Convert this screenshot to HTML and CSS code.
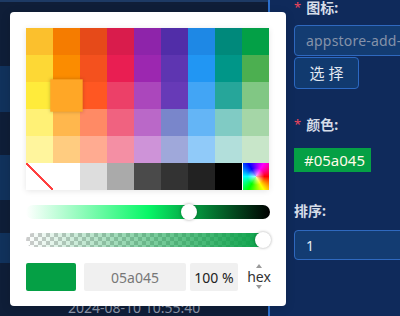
FILE: index.html
```html
<!DOCTYPE html>
<html lang="zh">
<head>
<meta charset="utf-8">
<link rel="stylesheet" href="styles.css">
</head>
<body>
<div class="page">
  <div class="list">
    <div class="row stripe"></div>
    <div class="row dark r1"></div>
    <div class="row light r2"></div>
    <div class="row dark r3"></div>
    <div class="row light r4"></div>
    <div class="row dark r5"></div>
    <div class="row light r6"></div>
    <div class="row dark r7"><span class="date">2024-08-10 10:55:40</span></div>
  </div>

  <aside class="form">
    <div class="label"><span class="req">*</span>图标:</div>
    <div class="input icon-input"><span class="placeholder">appstore-add-o</span></div>
    <button class="btn">选 择</button>

    <div class="label l2"><span class="req">*</span>颜色:</div>
    <div class="tag">#05a045</div>

    <div class="label l3">排序:</div>
    <div class="input sort-input"><span class="value">1</span></div>
  </aside>

  <div class="picker">
    <div class="palette">
      <span class="cell" style="background:#fbc02d"></span>
      <span class="cell" style="background:#f57c00"></span>
      <span class="cell" style="background:#e64a19"></span>
      <span class="cell" style="background:#d91c4c"></span>
      <span class="cell" style="background:#8e24aa"></span>
      <span class="cell" style="background:#512da8"></span>
      <span class="cell" style="background:#1e88e5"></span>
      <span class="cell" style="background:#00897b"></span>
      <span class="cell" style="background:#03a046"></span>

      <span class="cell" style="background:#fdd835"></span>
      <span class="cell" style="background:#fb8c00"></span>
      <span class="cell" style="background:#f4511e"></span>
      <span class="cell" style="background:#e91e52"></span>
      <span class="cell" style="background:#9c27b0"></span>
      <span class="cell" style="background:#5e35b1"></span>
      <span class="cell" style="background:#2196f3"></span>
      <span class="cell" style="background:#009688"></span>
      <span class="cell" style="background:#4caf50"></span>

      <span class="cell" style="background:#ffeb3b"></span>
      <span class="cell selected" style="background:#ffa726"></span>
      <span class="cell" style="background:#ff5722"></span>
      <span class="cell" style="background:#ec4068"></span>
      <span class="cell" style="background:#ab47bc"></span>
      <span class="cell" style="background:#673ab7"></span>
      <span class="cell" style="background:#42a5f5"></span>
      <span class="cell" style="background:#26a69a"></span>
      <span class="cell" style="background:#81c784"></span>

      <span class="cell" style="background:#fff176"></span>
      <span class="cell" style="background:#ffb74d"></span>
      <span class="cell" style="background:#ff8a65"></span>
      <span class="cell" style="background:#f06280"></span>
      <span class="cell" style="background:#ba68c8"></span>
      <span class="cell" style="background:#7986cb"></span>
      <span class="cell" style="background:#64b5f6"></span>
      <span class="cell" style="background:#80cbc4"></span>
      <span class="cell" style="background:#a5d6a7"></span>

      <span class="cell" style="background:#fff59d"></span>
      <span class="cell" style="background:#ffcc80"></span>
      <span class="cell" style="background:#ffab91"></span>
      <span class="cell" style="background:#f48fa4"></span>
      <span class="cell" style="background:#ce93d8"></span>
      <span class="cell" style="background:#9fa8da"></span>
      <span class="cell" style="background:#90caf9"></span>
      <span class="cell" style="background:#b2dfdb"></span>
      <span class="cell" style="background:#c8e6c9"></span>

      <span class="cell none"></span>
      <span class="cell" style="background:#ffffff"></span>
      <span class="cell" style="background:#dddddd"></span>
      <span class="cell" style="background:#aaaaaa"></span>
      <span class="cell" style="background:#4a4a4a"></span>
      <span class="cell" style="background:#333333"></span>
      <span class="cell" style="background:#222222"></span>
      <span class="cell" style="background:#000000"></span>
      <span class="cell rainbow"></span>
    </div>

    <div class="slider lightness"><span class="thumb" style="left:67%"></span></div>
    <div class="slider alpha"><span class="bar"></span><span class="thumb end"></span></div>

    <div class="inputs">
      <span class="swatch"></span>
      <span class="field hex">05a045</span>
      <span class="field pct">100 %</span>
      <span class="mode">
        <span class="tri up"></span>
        <span class="mode-text">hex</span>
        <span class="tri down"></span>
      </span>
    </div>
  </div>
</div>
</body>
</html>
```

FILE: styles.css
```css
* { box-sizing: border-box; }
html, body { margin: 0; padding: 0; }
body {
  width: 400px;
  height: 316px;
  overflow: hidden;
  font-family: "Noto Sans", "Noto Sans CJK SC", sans-serif;
  background: #0f1e38;
}
.page {
  position: relative;
  display: flex;
  width: 400px;
  height: 316px;
}

/* left list background */
.list {
  width: 268px;
  flex: none;
  display: flex;
  flex-direction: column;
}
.row { flex: none; }
.stripe { height: 2px; background: #1d3a64; }
.dark { background: #0f1e38; }
.light { background: #11325c; }
.r1 { height: 64px; }
.r2 { height: 46px; }
.r3 { height: 43px; }
.r4 { height: 45px; }
.r5 { height: 33px; }
.r6 { height: 30px; }
.r7 { flex: 1; padding: 35px 0 0 68px; }
.date {
  display: block;
  font-size: 14px;
  line-height: 20px;
  color: #8e97aa;
  white-space: nowrap;
}

/* right form */
.form {
  flex: 1;
  min-width: 0;
  border-left: 2px solid #2b6fcc;
  background: #0f2a5b;
  padding: 1px 0 0 24px;
  display: flex;
  flex-direction: column;
  align-items: flex-start;
  overflow: hidden;
}
.label {
  font-size: 14px;
  line-height: 14px;
  font-weight: 700;
  color: #d5dce8;
  white-space: nowrap;
}
.req {
  color: #f0455c;
  font-weight: 400;
  margin-right: 5px;
  font-size: 13px;
  position: relative;
  top: -1px;
}
.input {
  width: 160px;
  flex: none;
  border: 1px solid #2f69bf;
  border-radius: 4px;
  background: #133c72;
  font-size: 14px;
  display: flex;
  align-items: center;
  padding-left: 11px;
  white-space: nowrap;
  overflow: hidden;
}
.icon-input { margin-top: 10px; height: 31px; }
.placeholder { color: #8592a9; letter-spacing: 0.2px; }
.btn {
  margin-top: 1px;
  width: 65px;
  height: 32px;
  border: 1px solid #2c69c2;
  border-radius: 4px;
  background: #113a6f;
  color: #e2e8f1;
  font-family: inherit;
  font-size: 15px;
  padding: 0;
  line-height: 30px;
}
.l2 { margin-top: 29px; }
.tag {
  margin-top: 16px;
  height: 24px;
  width: 77px;
  background: #05a045;
  color: #fffbe8;
  font-size: 15px;
  line-height: 24px;
  padding-left: 10px;
}
.l3 { margin-top: 32px; }
.sort-input { margin-top: 12px; height: 30px; }
.value { color: #e8edf5; }

/* picker popup (overlay) */
.picker {
  position: absolute;
  left: 10px;
  top: 12px;
  width: 276px;
  height: 294px;
  background: #fff;
  border-radius: 4px;
  box-shadow: 0 2px 10px rgba(0, 0, 0, 0.15);
  padding: 16px 16px 15px;
  display: flex;
  flex-direction: column;
}
.palette {
  display: grid;
  grid-template-columns: repeat(9, 27px);
  grid-auto-rows: 27px;
  width: 243px;
  box-shadow: 0 1px 6px rgba(0, 0, 0, 0.1);
}
.cell { display: block; }
.cell.selected {
  position: relative;
  z-index: 1;
  transform: scale(1.2);
  box-shadow: 0 0 3px rgba(0, 0, 0, 0.2);
}
.cell.none {
  background: linear-gradient(to top right, #fff calc(50% - 1.2px), #ff4040 calc(50% - 0.8px), #ff4040 calc(50% + 0.8px), #fff calc(50% + 1.2px));
}
.cell.rainbow {
  margin-left: 1px;
  background:
    radial-gradient(circle, rgba(255,255,255,0.7) 0, rgba(255,255,255,0) 45%),
    conic-gradient(from 90deg, #f00, #ff0, #0f0, #0ff, #00f, #f0f, #f00);
}

.slider {
  position: relative;
  height: 14px;
  width: 244px;
  border-radius: 7px;
}
.lightness {
  margin-top: 15px;
  background: linear-gradient(to right, #fff, #08f767 50%, #000);
}
.alpha {
  margin-top: 14px;
  background: repeating-conic-gradient(#cccccc 0 25%, #ffffff 0 50%) 0 0 / 8px 8px;
}
.alpha .bar {
  position: absolute;
  inset: 0;
  border-radius: 7px;
  background: linear-gradient(to right, rgba(5,160,69,0), #05a045);
}
.thumb {
  position: absolute;
  top: -1px;
  width: 16px;
  height: 16px;
  border-radius: 50%;
  background: #fff;
  box-shadow: 0 0 3px rgba(0, 0, 0, 0.35);
  transform: translateX(-50%);
}
.thumb.end { left: auto; right: -1px; transform: none; }

.inputs {
  margin-top: 16px;
  height: 28px;
  display: flex;
  align-items: stretch;
}
.swatch {
  width: 50px;
  background: #05a045;
  border-radius: 2px;
}
.field {
  background: #f0f0f0;
  border-radius: 2px;
  font-size: 14px;
  display: flex;
  align-items: center;
  justify-content: center;
}
.hex { width: 102px; margin-left: 8px; color: #777; }
.pct { width: 48px; margin-left: 4px; color: #222; }
.mode {
  margin-left: 10px;
  width: 22px;
  display: flex;
  flex-direction: column;
  align-items: center;
  justify-content: space-between;
  padding: 1px 0 2px;
}
.mode-text {
  font-size: 14px;
  line-height: 14px;
  color: #333;
}
.tri {
  width: 0;
  height: 0;
  border-left: 3px solid transparent;
  border-right: 3px solid transparent;
}
.tri.up { border-bottom: 4px solid #9a9a9a; }
.tri.down { border-top: 4px solid #9a9a9a; }
```
